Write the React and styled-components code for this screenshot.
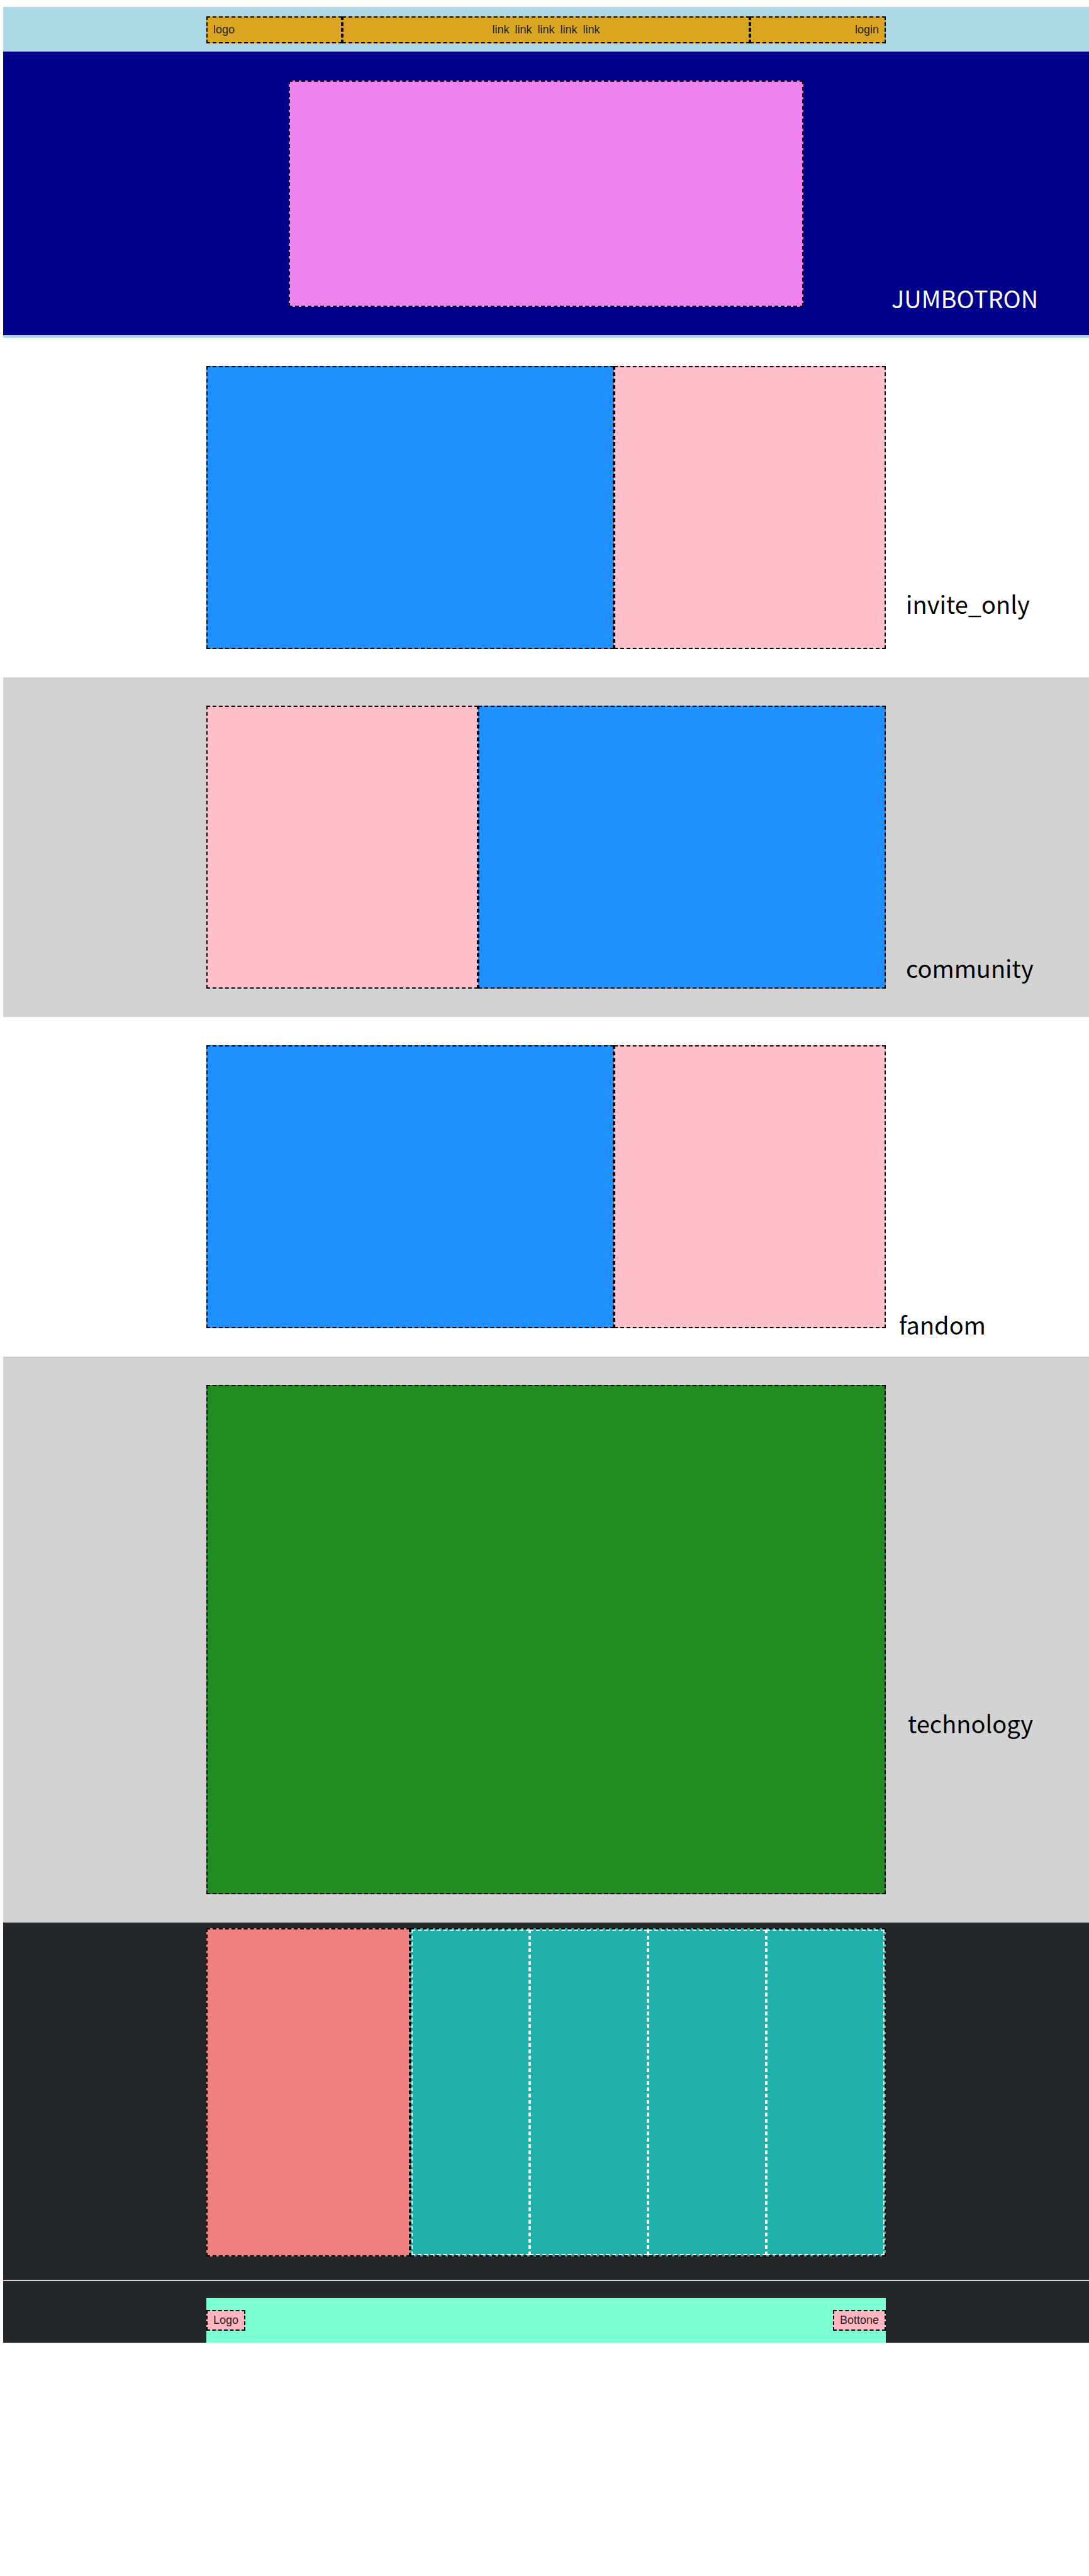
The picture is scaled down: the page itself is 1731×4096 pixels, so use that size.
import React from 'react';
import styled, { createGlobalStyle } from 'styled-components';

const GlobalStyle = createGlobalStyle`
  *, *::before, *::after { box-sizing: border-box; }
  body {
    margin: 0;
    background: #fff;
    color: #000;
    font-family: "Liberation Sans", Arial, sans-serif;
    font-size: 18px;
    line-height: 20px;
  }
`;

const Page = styled.div`
  padding: 11px 0 0 5px;
`;

const Container = styled.div`
  display: flex;
  width: 100%;
  max-width: 1080px;
  margin: 0 auto;
`;

const Top = styled.header`
  background: lightblue;
  padding: 15px 0 4px;
`;

const Bar = styled(Container)`
  margin-bottom: 13px;
`;

const BarCell = styled.div`
  flex: 0 0 ${(p) => p.$share}%;
  display: flex;
  justify-content: ${(p) => p.$align};
  gap: 9px;
  padding: 9px 9px 10px;
  border: 2px dashed #000;
  background: goldenrod;
`;

const TextLink = styled.a`
  color: #212529;
  text-decoration: none;
`;

const Band = styled.section`
  display: grid;
  grid-template-columns: 1fr minmax(0, 1080px) 1fr;
  padding: ${(p) => p.$top || 45}px 0 0;
  background: ${(p) => p.$color};
`;

const Row = styled.div`
  grid-column: 2;
  display: flex;
  justify-content: center;
  margin-bottom: 45px;
`;

const Block = styled.div`
  flex: 0 0 ${(p) => p.$share}%;
  height: ${(p) => p.$height || 450}px;
  border: 2px dashed #000;
  background: ${(p) => p.$color};
`;

const Hero = styled.div`
  width: 818px;
  height: 360px;
  border: 2px dashed #000;
  background: violet;
`;

const Label = styled.h2`
  grid-column: 3;
  align-self: end;
  margin: 0 0 ${(p) => p.$bottom}px;
  padding-left: ${(p) => p.$left}px;
  color: ${(p) => p.$color || '#000'};
  font-family: "Noto Sans CJK SC", "Noto Sans", sans-serif;
  font-size: 38px;
  font-weight: 400;
  line-height: 44px;
`;

const Footer = styled.footer`
  padding-top: 9px;
  background: #24282b;
`;

const Columns = styled.div`
  flex: 0 0 70%;
  display: flex;
  border: 2px dashed #000;
  background: lightseagreen;
`;

const Column = styled.div`
  flex: 1;
  border: 2px dashed #fff;
`;

const Rule = styled.hr`
  height: 2px;
  margin: 37px 0 27px;
  border: 0;
  background: lightgray;
`;

const Bottom = styled(Container)`
  align-items: center;
  justify-content: space-between;
  height: 71px;
  background: aquamarine;
`;

const Tag = styled.div`
  padding: 4px 9px 5px;
  border: 2px dashed #000;
  background: lightpink;
  color: #212529;
  font: inherit;
`;

export default function App() {
  return (
    <>
      <GlobalStyle />
      <Page>
        <Top>
          <Bar>
            <BarCell $share={20} $align="flex-start">
              <TextLink href="#">logo</TextLink>
            </BarCell>
            <BarCell as="nav" $share={60} $align="center">
              {[1, 2, 3, 4, 5].map((n) => (
                <TextLink key={n} href="#">link</TextLink>
              ))}
            </BarCell>
            <BarCell $share={20} $align="flex-end">
              <TextLink href="#">login</TextLink>
            </BarCell>
          </Bar>
          <Band $color="darkblue" $top={46}>
            <Row>
              <Hero />
            </Row>
            <Label $left={9} $bottom={37} $color="#fff">JUMBOTRON</Label>
          </Band>
        </Top>
        <main>
          <Band $color="#fff">
            <Row>
              <Block $share={60} $color="dodgerblue" />
              <Block $share={40} $color="pink" />
            </Row>
            <Label $left={32} $bottom={95}>invite_only</Label>
          </Band>
          <Band $color="lightgray">
            <Row>
              <Block $share={40} $color="pink" />
              <Block $share={60} $color="dodgerblue" />
            </Row>
            <Label $left={32} $bottom={56}>community</Label>
          </Band>
          <Band $color="#fff">
            <Row>
              <Block $share={60} $color="dodgerblue" />
              <Block $share={40} $color="pink" />
            </Row>
            <Label $left={21} $bottom={29}>fandom</Label>
          </Band>
          <Band $color="lightgray">
            <Row>
              <Block $share={100} $height={810} $color="forestgreen" />
            </Row>
            <Label $left={35} $bottom={295}>technology</Label>
          </Band>
        </main>
        <Footer>
          <Container>
            <Block $share={30} $height={522} $color="lightcoral" />
            <Columns>
              <Column />
              <Column />
              <Column />
              <Column />
            </Columns>
          </Container>
          <Rule />
          <Bottom>
            <Tag>Logo</Tag>
            <Tag as="button" type="button">Bottone</Tag>
          </Bottom>
        </Footer>
      </Page>
    </>
  );
}
